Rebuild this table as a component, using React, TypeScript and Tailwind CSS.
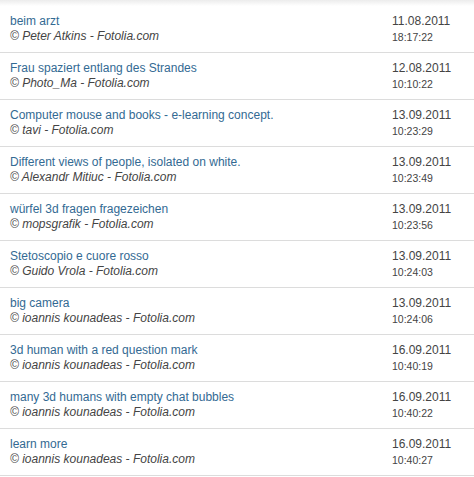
const rows = [
  { title: "beim arzt", credit: "© Peter Atkins - Fotolia.com", date: "11.08.2011", time: "18:17:22" },
  { title: "Frau spaziert entlang des Strandes", credit: "© Photo_Ma - Fotolia.com", date: "12.08.2011", time: "10:10:22" },
  { title: "Computer mouse and books - e-learning concept.", credit: "© tavi - Fotolia.com", date: "13.09.2011", time: "10:23:29" },
  { title: "Different views of people, isolated on white.", credit: "© Alexandr Mitiuc - Fotolia.com", date: "13.09.2011", time: "10:23:49" },
  { title: "würfel 3d fragen fragezeichen", credit: "© mopsgrafik - Fotolia.com", date: "13.09.2011", time: "10:23:56" },
  { title: "Stetoscopio e cuore rosso", credit: "© Guido Vrola - Fotolia.com", date: "13.09.2011", time: "10:24:03" },
  { title: "big camera", credit: "© ioannis kounadeas - Fotolia.com", date: "13.09.2011", time: "10:24:06" },
  { title: "3d human with a red question mark", credit: "© ioannis kounadeas - Fotolia.com", date: "16.09.2011", time: "10:40:19" },
  { title: "many 3d humans with empty chat bubbles", credit: "© ioannis kounadeas - Fotolia.com", date: "16.09.2011", time: "10:40:22" },
  { title: "learn more", credit: "© ioannis kounadeas - Fotolia.com", date: "16.09.2011", time: "10:40:27" },
];

export default function App() {
  return (
    <div className="w-[474px] h-[477px] bg-white font-['Liberation_Sans',Arial,sans-serif]">
      {/* faint shade at the top edge */}
      <div className="h-[6px] bg-gradient-to-b from-[#ececec] to-white" />
      {rows.map((r) => (
        <div key={r.title} className="flex h-[47px] border-b border-[#dcdcdc] pt-[8px]">
          <div className="flex-1 pl-[10px]">
            <div className="text-[12px] leading-[15px] text-[#336a93]">{r.title}</div>
            <div className="text-[12px] leading-[15px] italic text-[#444]">{r.credit}</div>
          </div>
          <div className="w-[82px]">
            <div className="text-[12px] leading-[15px] text-[#444]">{r.date}</div>
            <div className="text-[10.5px] leading-[16px] text-[#444]">{r.time}</div>
          </div>
        </div>
      ))}
    </div>
  );
}
